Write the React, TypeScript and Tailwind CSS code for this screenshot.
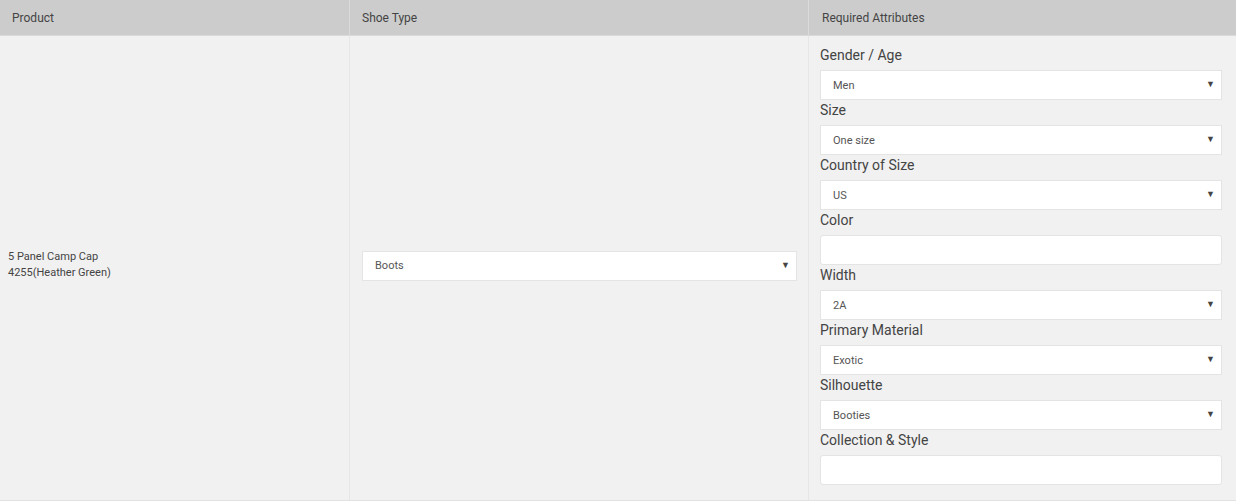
import React from 'react';

const font = { fontFamily: 'Roboto, "Liberation Sans", sans-serif' };

const Select: React.FC<{ value: string }> = ({ value }) => (
  <div className="flex h-[30px] items-center justify-between border border-[#e4e4e4] bg-white pt-[2px] pl-[12px] pr-[6px] text-[11px] text-[#555]">
    <span>{value}</span>
    <span className="-mt-[2px] text-[9px] text-[#444]">▼</span>
  </div>
);

const TextInput: React.FC = () => (
  <div className="h-[30px] rounded-[3px] border border-[#e4e4e4] bg-white" />
);

const attributes: { label: string; value?: string }[] = [
  { label: 'Gender / Age', value: 'Men' },
  { label: 'Size', value: 'One size' },
  { label: 'Country of Size', value: 'US' },
  { label: 'Color' },
  { label: 'Width', value: '2A' },
  { label: 'Primary Material', value: 'Exotic' },
  { label: 'Silhouette', value: 'Booties' },
  { label: 'Collection & Style' },
];

const App: React.FC = () => {
  return (
    <div className="w-[1236px] bg-white" style={font}>
      <div className="grid grid-cols-[350px_459px_1fr] border-b border-[#e2e2e2]">
        {/* header */}
        <div className="flex h-[36px] items-center border-r border-b border-[#dadada] bg-[#cccccc] pl-[12px] text-[12px] text-[#444]">Product</div>
        <div className="flex h-[36px] items-center border-r border-b border-[#dadada] bg-[#cccccc] pl-[12px] text-[12px] text-[#444]">Shoe Type</div>
        <div className="flex h-[36px] items-center border-b border-[#dadada] bg-[#cccccc] pl-[13px] text-[12px] text-[#444]">Required Attributes</div>

        {/* row */}
        <div className="flex items-center border-r border-[#e6e6e6] bg-[#f1f1f1] pl-[8px] text-[11px] leading-[16px] text-[#444]">
          <div className="-mt-[6px]">
            5 Panel Camp Cap
            <br />
            4255(Heather Green)
          </div>
        </div>
        <div className="flex items-center border-r border-[#e6e6e6] bg-[#f1f1f1] pl-[12px] pr-[11px]">
          <div className="-mt-[5px] w-full">
            <Select value="Boots" />
          </div>
        </div>
        <div className="bg-[#f1f1f1] pt-[9px] pb-[15px] pl-[11px] pr-[14px]">
          {attributes.map((a) => (
            <div key={a.label}>
              <div className="mb-[5px] h-[20px] text-[14px] leading-[20px] text-[#444]">{a.label}</div>
              {a.value ? <Select value={a.value} /> : <TextInput />}
            </div>
          ))}
        </div>
      </div>
    </div>
  );
};

export default App;
